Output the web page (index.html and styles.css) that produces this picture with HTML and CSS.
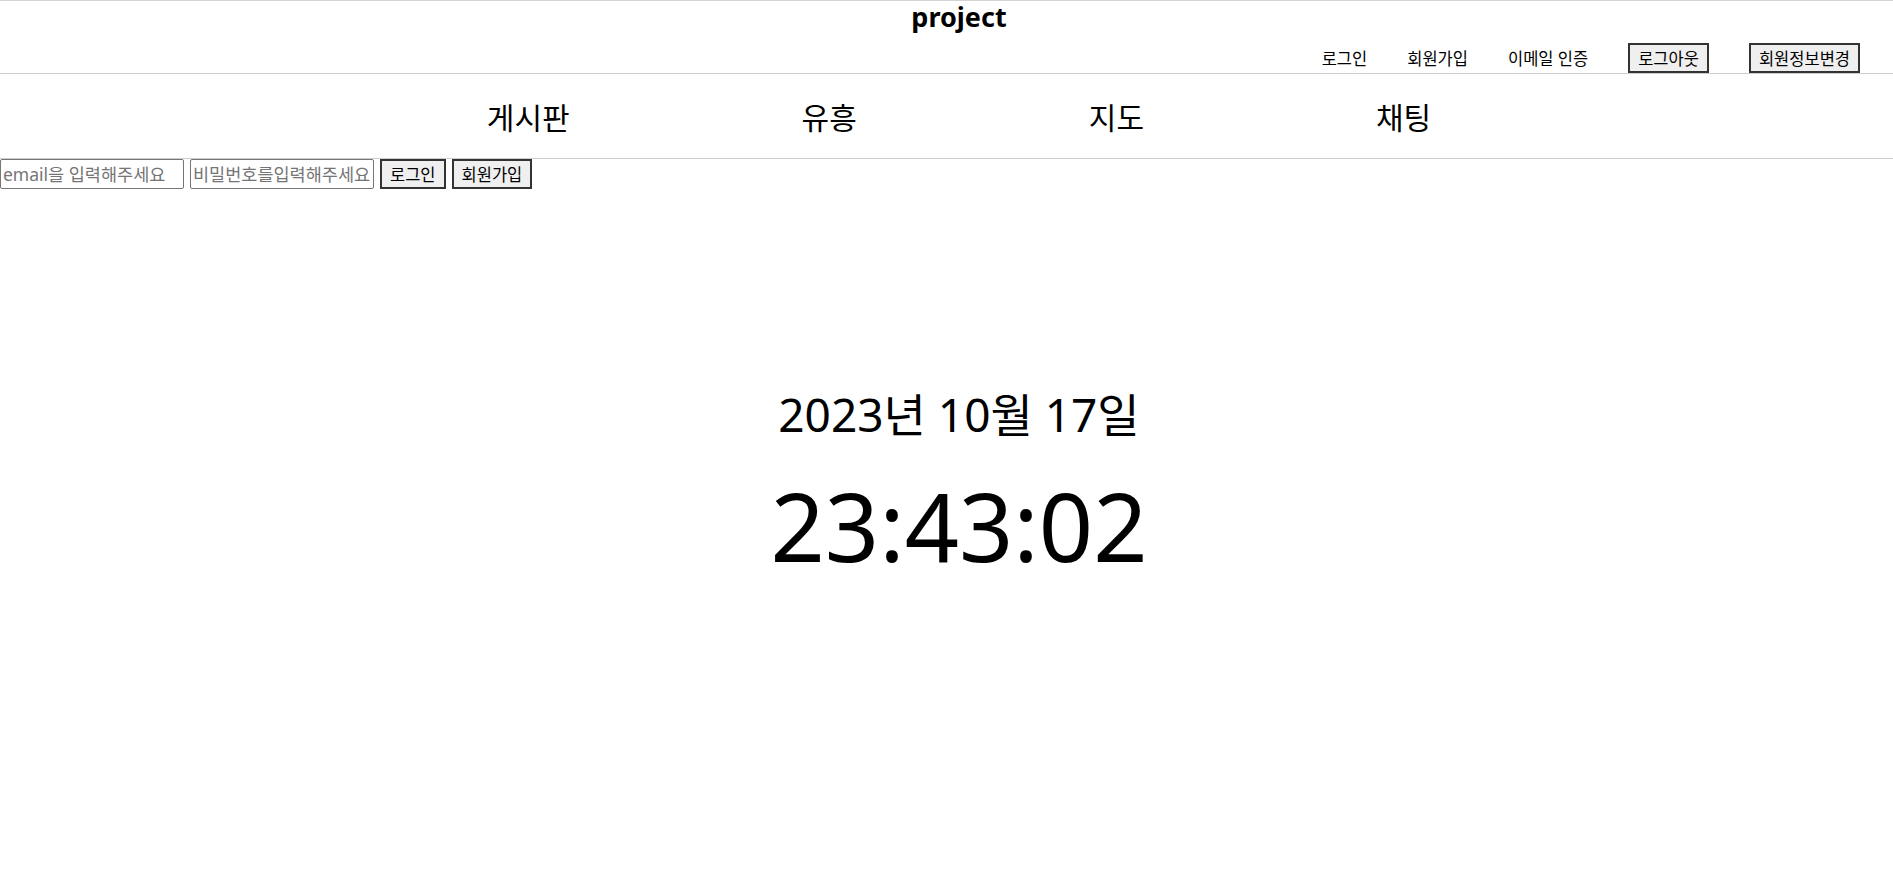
FILE: index.html
```html
<!DOCTYPE html>
<html lang="ko">
<head>
    <meta charset="UTF-8">
    <meta name="viewport" content="width=device-width, initial-scale=1.0">
    <title>project</title>
    <link rel="stylesheet" href="styles.css">
</head>
<body>
    <header class="top-header">
        <h1 class="logo">project</h1>
        <ul class="user-menu">
            <li><a href="#">로그인</a></li>
            <li><a href="#">회원가입</a></li>
            <li><a href="#">이메일 인증</a></li>
            <li><button class="btn">로그아웃</button></li>
            <li><button class="btn">회원정보변경</button></li>
        </ul>
    </header>

    <nav class="main-nav">
        <a href="#">게시판</a>
        <a href="#">유흥</a>
        <a href="#">지도</a>
        <a href="#">채팅</a>
    </nav>

    <form class="login-form">
        <input type="text" placeholder="email을 입력해주세요">
        <input type="password" placeholder="비밀번호를입력해주세요">
        <button type="button" class="btn">로그인</button>
        <button type="button" class="btn">회원가입</button>
    </form>

    <main class="clock">
        <h2 id="clockDate" class="clock-date">2023년 10월 17일</h2>
        <h2 id="clockTime" class="clock-time">23:43:02</h2>
    </main>
</body>
</html>
```

FILE: styles.css
```css
body {
    margin: 0;
    font-family: "Noto Sans", "Noto Sans CJK KR", sans-serif;
    color: #000;
    background-color: #fff;
}
a {
    color: #000;
    text-decoration: none;
}
.top-header {
    height: 72px;
    border-top: 1px solid #d3d3d3;
    border-bottom: 1px solid #ccc;
    display: flex;
    flex-direction: column;
    justify-content: space-between;
}
.logo {
    margin: 0;
    padding-left: 25px;
    text-align: center;
    font-size: 27px;
    line-height: 32px;
}
.user-menu {
    list-style: none;
    margin: 0;
    padding: 0 33px 0 0;
    display: flex;
    justify-content: flex-end;
    align-items: center;
    gap: 40px;
    font-size: 16.5px;
}
.btn {
    font-family: "Noto Sans CJK KR", sans-serif;
    font-size: 16.5px;
    height: 30px;
    padding: 0 8px;
    border: 2px solid #333;
    background-color: #efefef;
    color: #000;
    cursor: pointer;
}
.main-nav {
    height: 84px;
    padding-left: 25px;
    border-bottom: 1px solid #ccc;
    display: flex;
    justify-content: center;
    align-items: center;
    gap: 232px;
    font-size: 30px;
}
.login-form {
    display: flex;
    align-items: flex-start;
    gap: 6px;
}
.login-form input {
    width: 184px;
    height: 30px;
    box-sizing: border-box;
    padding: 1px 2px;
    border: 1px solid #767676;
    border-radius: 2px;
    font-family: "Noto Sans", "Noto Sans CJK KR", sans-serif;
    font-size: 17.5px;
}
.login-form input::placeholder {
    color: #757575;
}
.clock {
    padding-top: 195px;
    padding-left: 25px;
    text-align: center;
}
.clock-date {
    margin: 0;
    font-weight: normal;
    font-size: 46px;
    line-height: 60px;
}
.clock-time {
    margin: 26px 0 0;
    font-weight: normal;
    font-size: 95px;
    line-height: 110px;
}
```
